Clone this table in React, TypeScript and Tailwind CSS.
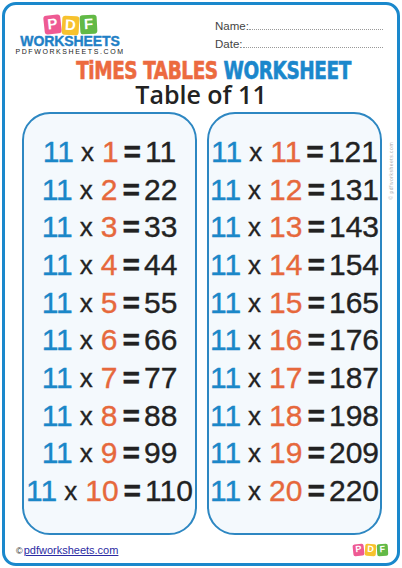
const leftRows = [1, 2, 3, 4, 5, 6, 7, 8, 9, 10].map((n) => [n, n * 11]);
// the sheet prints 131 for 11 x 12
const rightRows = [11, 12, 13, 14, 15, 16, 17, 18, 19, 20].map((n) => [n, n === 12 ? 131 : n * 11]);

const PdfBlocks = ({ size = 'big' }: { size?: 'big' | 'small' }) => {
  const big = size === 'big';
  const box = big
    ? 'w-[17px] h-[19px] text-[15px] rounded-[3px]'
    : 'w-[11px] h-[12px] text-[9px] rounded-[2px]';
  return (
    <div className="flex items-end gap-[1px]">
      <div className={`${box} bg-[#ee5a93] text-white font-black flex items-center justify-center -rotate-6`}>P</div>
      <div className={`${box} bg-[#f7c22e] text-white font-black flex items-center justify-center rotate-3 ${big ? '-mb-[1px]' : ''}`}>D</div>
      <div className={`${box} bg-[#62b946] text-white font-black flex items-center justify-center -rotate-3`}>F</div>
    </div>
  );
};

const Row = ({ n, r }: { n: number; r: number }) => (
  <div className="h-[37.7px] flex items-center justify-center whitespace-nowrap leading-none [-webkit-text-stroke:0.35px]">
    <span className="text-[30px] text-[#1b87c8]">11</span>
    <span className="text-[26px] text-[#222] ml-[7px] mr-[8px]">x</span>
    <span className="text-[30px] text-[#e6683c]">{n}</span>
    <span className="text-[30px] text-[#222] font-bold ml-[5px] mr-[4px]">=</span>
    <span className="text-[30px] text-[#222]">{r}</span>
  </div>
);

const Card = ({ rows }: { rows: number[][] }) => (
  <div className="flex-1 h-[423px] rounded-[28px] border-2 border-[#2d87c2] bg-[#f4f9fd] pt-[19px] flex flex-col">
    {rows.map(([n, r]) => (
      <Row key={n} n={n} r={r} />
    ))}
  </div>
);

export default function App() {
  return (
    <div className="w-[402px] h-[568px] bg-white p-[2px] font-['Liberation_Sans',Arial,sans-serif]">
      <div className="relative h-full rounded-[14px] border-[3px] border-[#1a88cc] flex flex-col">
        {/* header */}
        <div className="flex justify-between pl-[11px] pr-[14px] pt-[10px] h-[53px]">
          <div className="flex flex-col items-center w-[108px]">
            <PdfBlocks />
            <div className="text-[14px] leading-[13px] font-black text-[#1f80c6] mt-[1px] tracking-[-0.1px] [-webkit-text-stroke:0.4px]">WORKSHEETS</div>
            <div className="text-[7px] leading-[7px] text-[#222] tracking-[1.6px]">PDFWORKSHEETS.COM</div>
          </div>
          <div className="w-[168px] pt-[2px] text-[11.5px] leading-[18px] text-[#444] flex flex-col">
            <div className="flex">
              <span>Name:</span>
              <span className="flex-1 border-b border-dotted border-[#999] mb-[5px]" />
            </div>
            <div className="flex">
              <span>Date:</span>
              <span className="flex-1 border-b border-dotted border-[#999] mb-[5px]" />
            </div>
          </div>
        </div>

        {/* title */}
        <div className="h-[24px] mt-[1px] flex justify-center items-center pl-[24px]">
          <div className="scale-x-[0.82] flex gap-[7px] leading-[22px] font-['DejaVu_Sans_Condensed','DejaVu_Sans',sans-serif] font-bold text-[25px] tracking-[-0.5px] whitespace-nowrap [-webkit-text-stroke:0.6px]">
            <span className="block h-[22px] text-[#ec6a3f]">TiMES TABLES</span>
            <span className="block h-[22px] text-[#1b87cc]">WORKSHEET</span>
          </div>
        </div>
        <div className="text-center text-[25px] leading-[26px] font-semibold text-[#222] font-['Open_Sans',sans-serif] -mt-[2px]">
          Table of 11
        </div>

        {/* cards */}
        <div className="flex gap-[10px] pl-[17px] pr-[15px] mt-[5px]">
          <Card rows={leftRows} />
          <Card rows={rightRows} />
        </div>

        {/* footer */}
        <div className="flex items-center justify-between pl-[11px] pr-[9px] mt-[7px]">
          <div className="flex items-end">
            <span className="text-[9px] text-[#222] mr-[1px]">©</span>
            <span className="text-[11px] text-[#2b2ba3] underline">pdfworksheets.com</span>
          </div>
          <PdfBlocks size="small" />
        </div>

        {/* side watermark */}
        <div className="absolute right-[1px] top-[128px] h-[75px] w-[8px] flex items-center justify-center">
          <span className="-rotate-90 whitespace-nowrap text-[5px] text-[#aaa] tracking-[0.5px]">© pdfworksheets.com</span>
        </div>
      </div>
    </div>
  );
}
